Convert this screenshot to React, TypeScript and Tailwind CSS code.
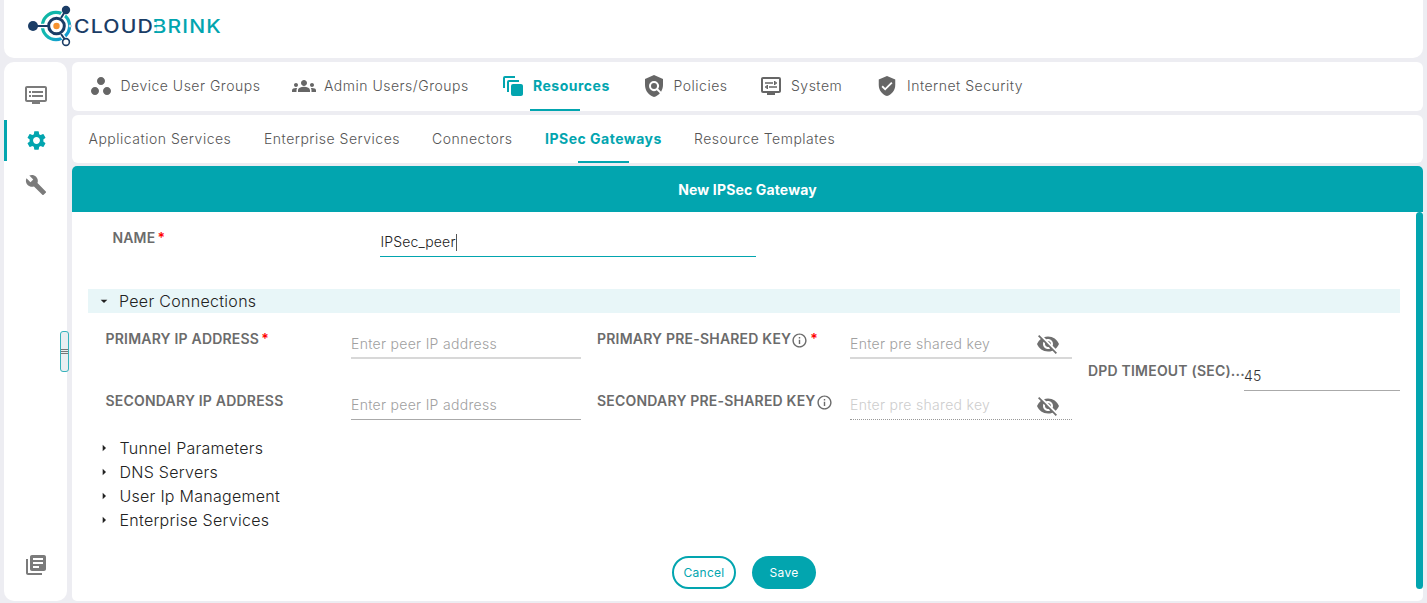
import type { ReactNode } from "react";
import {
  MdArrowDropDown,
  MdArrowRight,
  MdAutoAwesomeMotion,
  MdBuild,
  MdDvr,
  MdGroups,
  MdInfoOutline,
  MdLibraryBooks,
  MdOutlineDisplaySettings,
  MdPolicy,
  MdSettings,
  MdVerifiedUser,
  MdVisibilityOff,
  MdWorkspaces,
} from "react-icons/md";

function Logo() {
  return (
    <svg width="196" height="42" viewBox="0 0 196 42" className="block">
      <defs>
        <linearGradient id="ring" x1="0" y1="0" x2="1" y2="1">
          <stop offset="0" stopColor="#0db5a0" />
          <stop offset="0.5" stopColor="#14b8b4" />
          <stop offset="1" stopColor="#1290dc" />
        </linearGradient>
      </defs>
      <circle cx="28" cy="21" r="13.6" fill="none" stroke="url(#ring)" strokeWidth="3.2" />
      <path d="M5 21H20M33 13L38 5M33 29L38 36" stroke="#fff" strokeWidth="4.5" />
      <path d="M5 21H20M33 13L38 5M33 29L38 36" stroke="#1b3d66" strokeWidth="2" />
      <circle cx="28.5" cy="21" r="7.8" fill="#fff" stroke="#1b3d66" strokeWidth="3" />
      <circle cx="28.5" cy="21" r="3.2" fill="#f7922d" />
      <circle cx="5" cy="21" r="5" fill="#1b3d66" />
      <circle cx="38" cy="5" r="4.2" fill="#1b3d66" />
      <circle cx="38" cy="37" r="3.4" fill="#fff" stroke="#1b3d66" strokeWidth="1.6" />
      <circle cx="42" cy="21" r="1.2" fill="#fff" stroke="#8aa6c4" strokeWidth="0.6" />
      <text x="46" y="28" fontSize="18" letterSpacing="1" textLength="80" lengthAdjust="spacingAndGlyphs" fill="#1b3d66" className="font-['Inter',sans-serif] font-medium">CLOUD</text>
      <text x="124.5" y="28" fontSize="18" letterSpacing="1" textLength="69.5" lengthAdjust="spacingAndGlyphs" fill="#02a5af" className="font-['Inter',sans-serif] font-medium">BRINK</text>
      <path d="M124.5 16.9h4.2v3h-4.2zM124.5 22.2h4.2v3.8h-4.2z" fill="#fff" />
    </svg>
  );
}

function Tab({ icon, label, width, active = false }: { icon?: ReactNode; label: string; width: string; active?: boolean }) {
  return (
    <div className={`flex shrink-0 items-center ${width} ${active ? "font-bold text-[#02a5af]" : "font-light text-[#555]"}`}>
      {icon && <span className={`flex shrink-0 justify-center ${active ? "text-[#02a5af]" : "text-[#666]"}`}>{icon}</span>}
      <span className="whitespace-nowrap">{label}</span>
    </div>
  );
}

function FieldLabel({ children, required, info }: { children: string; required?: boolean; info?: boolean }) {
  return (
    <div className="flex items-center whitespace-nowrap text-[14px] leading-5 font-semibold tracking-[0.2px] text-[#6b6b6b]">
      {children}
      {info && <MdInfoOutline className="mt-0.5 size-[17px]" />}
      {required && <span className="ml-[2px] text-[#f00]">*</span>}
    </div>
  );
}

function KeyField({ disabled }: { disabled?: boolean }) {
  return (
    <div className={`flex h-[30px] w-[222px] items-center justify-between pr-3 ${disabled ? "border-b border-dotted border-[#999] text-[#cdcdcd]" : "border-b-2 border-[#d8d8d8] text-[#a0a0a0]"}`}>
      <span>Enter pre shared key</span>
      <MdVisibilityOff className="mt-0.5 size-6 text-[#6f6f6f]" />
    </div>
  );
}

const collapsed = ["Tunnel Parameters", "DNS Servers", "User Ip Management", "Enterprise Services"];

export default function App() {
  return (
    <div className="flex h-[603px] w-[1427px] flex-col gap-1 overflow-hidden bg-[#ededf2] pr-1 pb-0.5 pl-1 font-['Inter',sans-serif] text-[#333]">
      <header className="h-[58px] shrink-0 rounded-b-[10px] bg-white pt-[5px] pl-6">
        <Logo />
      </header>
      <div className="flex min-h-0 grow gap-[5px]">
        <nav className="relative flex w-[63px] shrink-0 flex-col items-center rounded-[10px] bg-white text-[#7b7b7b]">
          <MdDvr className="mt-[21px] size-6" />
          <div className="mt-[13px] flex h-[41px] w-full items-center justify-center border-l-[3px] border-[#02a5af] pr-[2px] text-[#02a5af]">
            <MdSettings className="size-[23px]" />
          </div>
          <MdBuild className="mt-[13px] size-[22px]" />
          <MdLibraryBooks className="mt-auto mb-6 size-6" />
          <div className="absolute top-[269px] right-[-2px] flex h-[41px] w-[9px] flex-col items-center justify-center gap-px rounded-[3px] border border-[#36b2bb] bg-[#e9eef1]">
            <i className="h-px w-[7px] bg-[#777]" />
            <i className="h-px w-[7px] bg-[#777]" />
            <i className="h-px w-[7px] bg-[#777]" />
          </div>
        </nav>
        <main className="flex grow flex-col">
          <div className="flex h-[49px] shrink-0 rounded-[6px] bg-white pl-4 text-[14px] tracking-[0.5px]">
            <div className="flex pb-[2px]">
              <Tab icon={<MdWorkspaces className="mr-2 ml-[0.5px] size-6" />} label="Device User Groups" width="w-[204px]" />
              <Tab icon={<MdGroups className="mr-2 size-6" />} label="Admin Users/Groups" width="w-[209px]" />
              <Tab icon={<MdAutoAwesomeMotion className="mr-2 size-6" />} label="Resources" width="w-[140.5px]" active />
              <Tab icon={<MdPolicy className="mr-2 size-6" />} label="Policies" width="w-[117px]" />
              <Tab icon={<MdOutlineDisplaySettings className="mr-[8.5px] size-6" />} label="System" width="w-[117.5px]" />
              <Tab icon={<MdVerifiedUser className="mr-[9px] size-[22px]" />} label="Internet Security" width="w-[160px]" />
            </div>
          </div>
          <div className="-mt-[2px] ml-[458px] h-[2px] w-[50px] bg-[#02a5af]" />
          <div className="mt-1 flex h-[48px] shrink-0 rounded-[6px] bg-white pb-[2px] pl-[16.5px] text-[14px] tracking-[0.5px]">
            <Tab label="Application Services" width="w-[175.5px]" />
            <Tab label="Enterprise Services" width="w-[168px]" />
            <Tab label="Connectors" width="w-[113px]" />
            <Tab label="IPSec Gateways" width="w-[149px]" active />
            <Tab label="Resource Templates" width="w-[160px]" />
          </div>
          <div className="-mt-[2px] ml-[506px] h-[2px] w-[51px] bg-[#02a5af]" />
          <section className="mt-[3px] flex min-h-0 grow flex-col rounded-[5px] bg-white">
            <h1 className="flex h-[46px] shrink-0 items-center justify-center rounded-t-[5px] bg-[#02a5af] text-[14px] font-bold tracking-[0.15px] text-white">New IPSec Gateway</h1>
            <div className="flex min-h-0 grow">
              <div className="flex grow flex-col pl-4">
                <div className="flex h-[77px] pl-[24.4px]">
                  <div className="w-[268px] pt-4"><FieldLabel required>NAME</FieldLabel></div>
                  <div className="flex h-[45px] w-[375.5px] items-end border-b border-b-[#02a5af] pb-1 text-[14px] font-light tracking-[0.15px] text-[#222]">
                    <span>IPSec_peer</span><span className="mb-px h-[17px] w-px bg-[#555]" />
                  </div>
                </div>
                <div className="flex h-6 w-[1312px] items-center bg-[#e8f6f8] pl-2 text-[16px] font-light tracking-[0.3px] text-[#222]">
                  <MdArrowDropDown className="mr-[7px] size-4" />Peer Connections
                </div>
                <div className="flex h-[122.5px] w-[1312px] pl-[17.5px] text-[14px] font-light tracking-[0.3px]">
                  <div className="flex w-[245.5px] flex-col gap-[42px] pt-4 tracking-normal">
                    <FieldLabel required>PRIMARY IP ADDRESS</FieldLabel>
                    <FieldLabel>SECONDARY IP ADDRESS</FieldLabel>
                  </div>
                  <div className="flex w-[246px] flex-col gap-[31px] pt-4 text-[#a0a0a0]">
                    <div className="flex h-[30px] w-[230px] items-center border-b-2 border-[#d8d8d8]">Enter peer IP address</div>
                    <div className="flex h-[30px] w-[230px] items-center border-b border-[#aaa]">Enter peer IP address</div>
                  </div>
                  <div className="flex w-[253px] flex-col gap-[42px] pt-4 tracking-normal">
                    <FieldLabel info required>PRIMARY PRE-SHARED KEY</FieldLabel>
                    <FieldLabel info>SECONDARY PRE-SHARED KEY</FieldLabel>
                  </div>
                  <div className="flex w-[238px] flex-col gap-[31px] pt-4">
                    <KeyField />
                    <KeyField disabled />
                  </div>
                  <div className="w-[156px] pt-[48px] tracking-normal"><FieldLabel>DPD TIMEOUT (SEC)...</FieldLabel></div>
                  <div className="mt-[47px] flex h-[31px] grow items-center border-b border-[#aaa] text-[#333]">45</div>
                </div>
                <div className="flex flex-col pl-2 text-[16px] font-light tracking-[0.27px] text-[#222]">
                  {collapsed.map((name) => (
                    <div key={name} className="flex h-[24.2px] items-center"><MdArrowRight className="mr-[7.5px] size-4" />{name}</div>
                  ))}
                </div>
                <div className="mt-[24px] flex gap-4 pl-[584px] text-[12px] tracking-[0.3px]">
                  <button className="h-[33px] w-16 rounded-full border-2 border-[#02a5af] text-[#02a5af]">Cancel</button>
                  <button className="h-[33px] w-16 rounded-full bg-[#02a5af] text-white">Save</button>
                </div>
              </div>
              <div className="h-[377px] w-[7px] shrink-0 rounded-full bg-[#02a5af]" />
            </div>
          </section>
        </main>
      </div>
    </div>
  );
}
